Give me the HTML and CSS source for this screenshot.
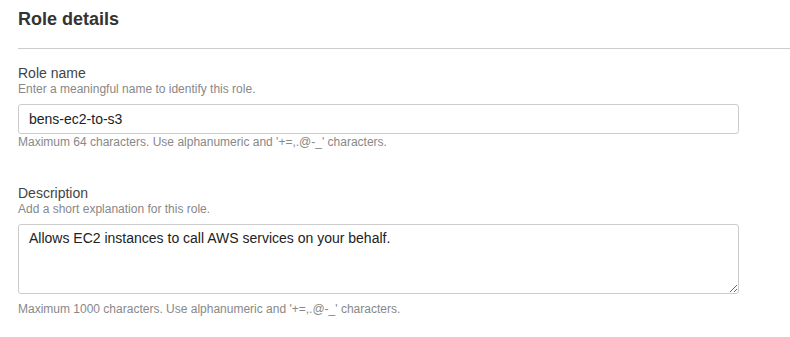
FILE: index.html
```html
<!DOCTYPE html>
<html lang="en">
<head>
<meta charset="utf-8">
<title>Role details</title>
<link rel="stylesheet" href="styles.css">
</head>
<body>
<div class="panel">
  <h2 class="panel-title">Role details</h2>
  <hr class="divider">
  <div class="field">
    <label class="field-label" for="role-name">Role name</label>
    <div class="field-hint">Enter a meaningful name to identify this role.</div>
    <input class="text-input" id="role-name" type="text" value="bens-ec2-to-s3">
    <div class="field-help">Maximum 64 characters. Use alphanumeric and '+=,.@-_' characters.</div>
  </div>
  <div class="field">
    <label class="field-label" for="role-desc">Description</label>
    <div class="field-hint">Add a short explanation for this role.</div>
    <textarea class="text-area" id="role-desc">Allows EC2 instances to call AWS services on your behalf.</textarea>
    <div class="field-help field-help-area">Maximum 1000 characters. Use alphanumeric and '+=,.@-_' characters.</div>
  </div>
</div>
</body>
</html>
```

FILE: styles.css
```css
html, body {
  margin: 0;
  padding: 0;
  background: #fff;
}

body {
  font-family: "Liberation Sans", Arial, sans-serif;
  color: #444;
}

.panel {
  padding: 8px 0 0 18px;
}

.panel-title {
  margin: 0;
  font-size: 18px;
  line-height: 22px;
  font-weight: bold;
  color: #333;
}

.divider {
  margin: 18px 0 16px;
  border: 0;
  border-top: 1px solid #ccc;
  height: 0;
}

.field + .field {
  margin-top: 35px;
}

.field-label {
  display: block;
  font-size: 14px;
  line-height: 17px;
  color: #444;
}

.field-hint {
  font-size: 12px;
  line-height: 14px;
  color: #888;
}

.text-input,
.text-area {
  display: block;
  box-sizing: border-box;
  width: 721px;
  margin: 8px 0 0;
  border: 1px solid #ccc;
  border-radius: 3px;
  font-family: "Liberation Sans", Arial, sans-serif;
  font-size: 14px;
  color: #222;
  background: #fff;
  outline: none;
}

.text-input {
  height: 30px;
  padding: 0 10px;
}

.text-area {
  height: 70px;
  padding: 5px 10px;
  line-height: 16px;
  resize: both;
}

.field-help {
  font-size: 12px;
  line-height: 16px;
  color: #888;
}

.field-help-area {
  margin-top: 7px;
}
```
